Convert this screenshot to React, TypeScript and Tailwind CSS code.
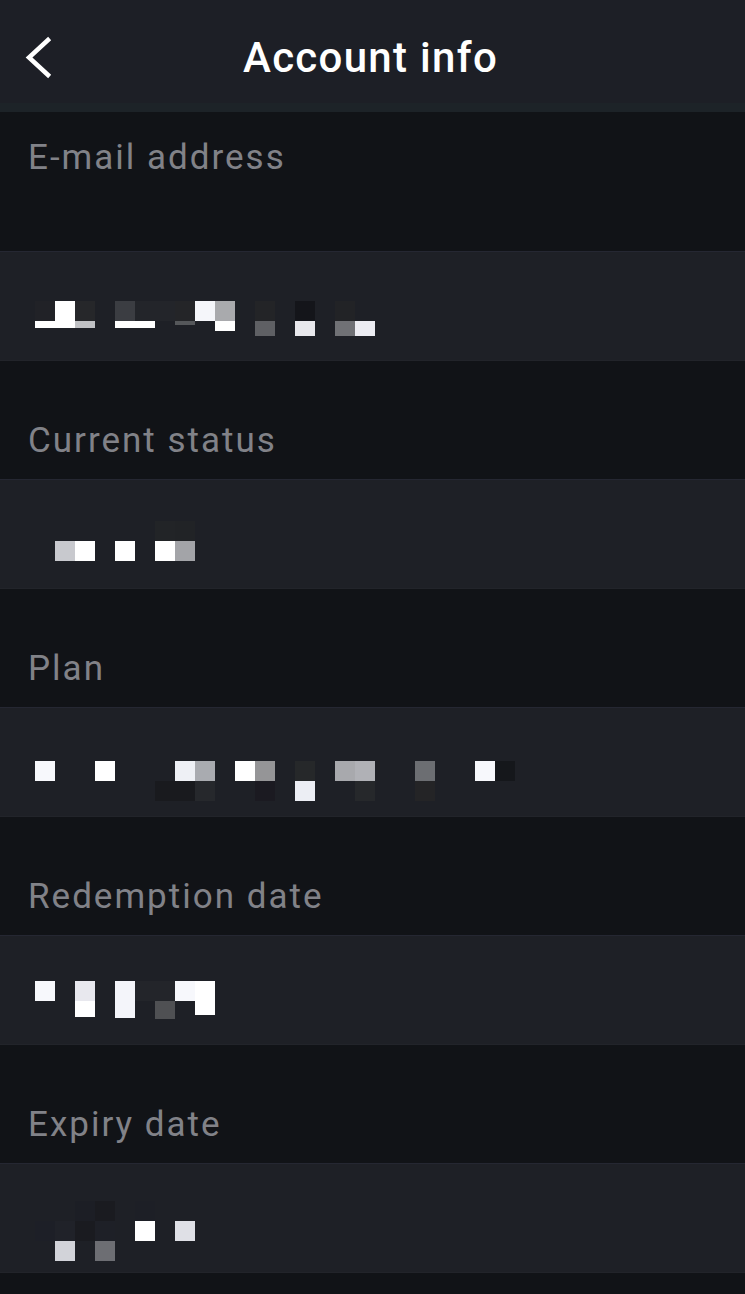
type Block = [number, number, string, number?];

type Field = {
  label: string;
  pad: string;
  blocks: Block[];
};

// mosaic blocks: [column, row, colour, height]
const fields: Field[] = [
  {
    label: "E-mail address",
    pad: "pt-[49px]",
    blocks: [
      [0, 0, "#212227"], [1, 0, "#ffffff"], [2, 0, "#26272a"], [4, 0, "#3b3d42"],
      [5, 0, "#23252a"], [6, 0, "#23252a"], [7, 0, "#242528"], [8, 0, "#f5f6fa"],
      [9, 0, "#a9aaad"], [11, 0, "#232427"], [13, 0, "#14151a"], [15, 0, "#222326"],
      [0, 1, "#ffffff", 7], [1, 1, "#ffffff", 7], [2, 1, "#c0c1c4", 7],
      [4, 1, "#ffffff", 7], [5, 1, "#ffffff", 7], [7, 1, "#55575a", 4],
      [9, 1, "#ffffff", 10], [11, 1, "#5f6064", 15], [13, 1, "#e8e8ec", 15],
      [15, 1, "#707175", 15], [16, 1, "#ececf2", 15],
    ],
  },
  {
    label: "Current status",
    pad: "pt-[41px]",
    blocks: [
      [1, 1, "#c8c9ce"], [2, 1, "#ffffff"], [4, 1, "#ffffff"], [6, 1, "#ffffff"],
      [7, 1, "#a3a4a8"], [6, 0, "#222427"], [7, 0, "#212326"],
    ],
  },
  {
    label: "Plan",
    pad: "pt-[53px]",
    blocks: [
      [0, 0, "#f7f8fc"], [3, 0, "#ffffff"], [7, 0, "#eef0f5"], [8, 0, "#a9abb0"],
      [10, 0, "#ffffff"], [11, 0, "#959597"], [13, 0, "#26282a"], [15, 0, "#a8a9ad"],
      [16, 0, "#b0b1b6"], [19, 0, "#6c6e72"], [22, 0, "#f7f8fc"], [23, 0, "#15171b"],
      [6, 1, "#191a1e"], [7, 1, "#191a1e"], [8, 1, "#26282c"], [11, 1, "#1b1a21"],
      [13, 1, "#eceef4"], [16, 1, "#26282b"], [19, 1, "#242426"],
    ],
  },
  {
    label: "Redemption date",
    pad: "pt-[45px]",
    blocks: [
      [0, 0, "#f7f8fc"], [2, 0, "#e8e8ee"], [4, 0, "#f4f5fa"], [5, 0, "#23252a"],
      [6, 0, "#23252a"], [7, 0, "#f7f8fc"], [8, 0, "#ffffff"],
      [2, 1, "#ffffff", 16], [4, 1, "#f4f5fa", 17], [6, 1, "#4f5053", 18],
      [8, 1, "#ffffff", 14],
    ],
  },
  {
    label: "Expiry date",
    pad: "pt-[37px]",
    blocks: [
      [2, 0, "#1c1e25"], [3, 0, "#1a1b20"], [5, 0, "#1d1f26"],
      [0, 1, "#1d1f27"], [1, 1, "#202229"], [2, 1, "#1a1b20"], [3, 1, "#1e2027"],
      [5, 1, "#ffffff"], [7, 1, "#dfe0e6"],
      [1, 2, "#d2d3d9"], [3, 2, "#6d6e73"],
    ],
  },
];

function Mosaic({ blocks }: { blocks: Block[] }) {
  return (
    <div className="grid grid-cols-[repeat(24,20px)] auto-rows-[20px]">
      {blocks.map(([c, r, color, h], i) => (
        <div
          key={i}
          style={{
            gridColumn: c + 1,
            gridRow: r + 1,
            backgroundColor: color,
            height: h ?? 20,
          }}
        />
      ))}
    </div>
  );
}

export default function App() {
  return (
    <div className="w-[745px] min-h-[1294px] bg-[#111317] font-['Roboto',sans-serif]">
      {/* header */}
      <div className="h-[112px] bg-[#1d1f26] border-b-[9px] border-[#1d2328] grid grid-cols-[1fr_auto_1fr] items-center pt-[12px]">
        <div className="pl-[24px] flex items-center">
          <svg width="32" height="44" viewBox="0 0 32 44" fill="none">
            <path
              d="M24 4 5 21.5 24 39"
              stroke="#ffffff"
              strokeWidth="4.5"
              strokeLinecap="square"
            />
          </svg>
        </div>
        <h1 className="text-[42px] leading-none font-medium text-white tracking-[1.3px] -ml-[4px]">
          Account info
        </h1>
        <div />
      </div>

      {fields.map((f, i) => (
        <div key={f.label}>
          <div
            className={
              i === 0
                ? "h-[139px] pt-[26px] pl-[28px]"
                : "h-[118px] flex items-end pb-[18px] pl-[28px]"
            }
          >
            <span className="text-[35px] leading-[40px] tracking-[2px] text-[#818288]">
              {f.label}
            </span>
          </div>
          <div
            className={`h-[110px] bg-[#1e2026] border-t border-b border-t-[#252732] border-b-[#22242a] pl-[35px] ${f.pad}`}
          >
            <Mosaic blocks={f.blocks} />
          </div>
        </div>
      ))}
    </div>
  );
}
